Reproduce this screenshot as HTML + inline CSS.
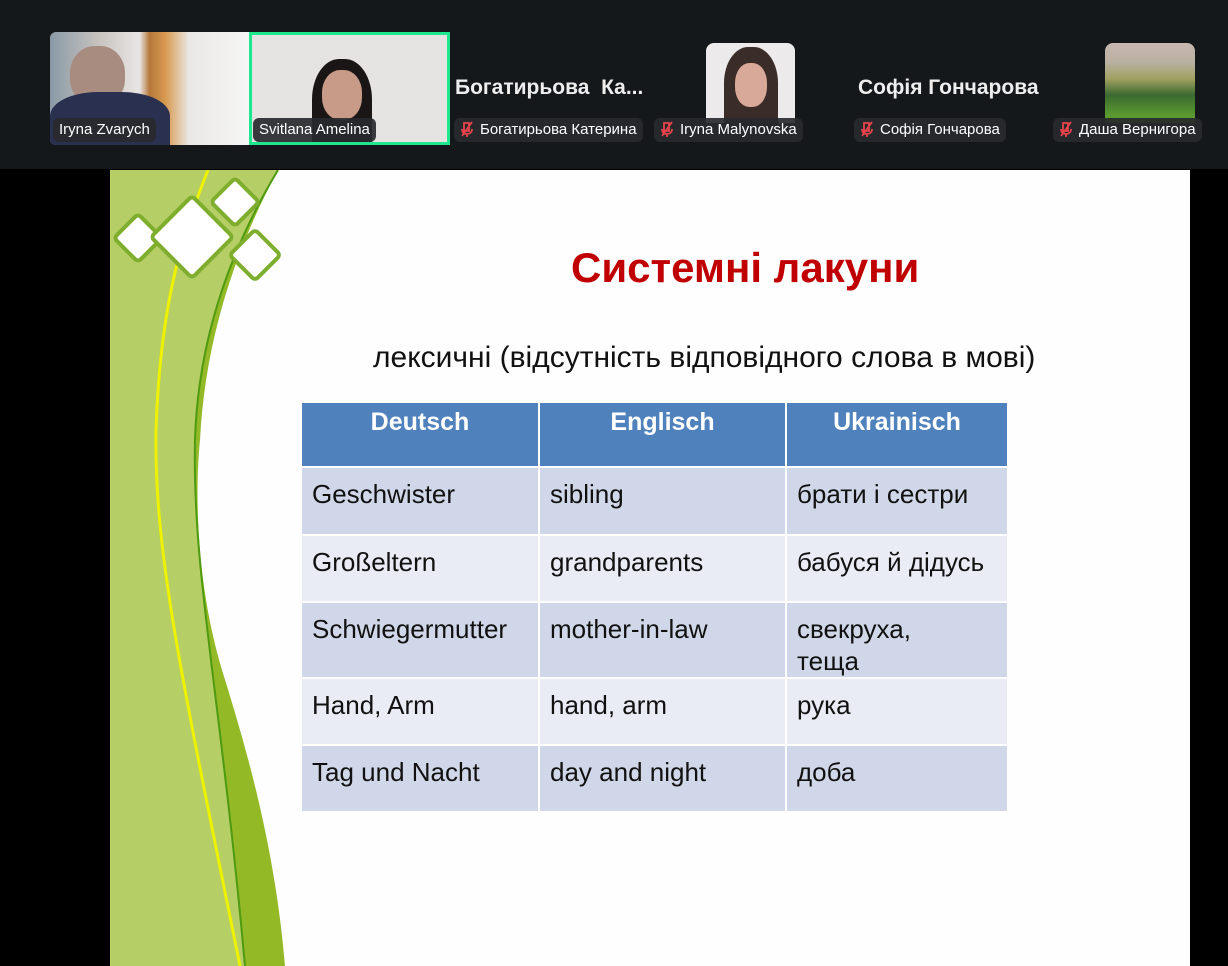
<!DOCTYPE html>
<html><head><meta charset="utf-8"><style>
*{margin:0;padding:0;box-sizing:border-box}
body{width:1228px;height:966px;background:#000;position:relative;overflow:hidden;font-family:"Liberation Sans","DejaVu Sans",sans-serif}
.top{position:absolute;left:0;top:0;width:1228px;height:169px;background:#15181b}
.tile{position:absolute;overflow:hidden}
.lbl{position:absolute;height:24px;background:rgba(40,42,46,.92);border-radius:6px;color:#fff;font-size:15px;line-height:24px;padding:0 6px;white-space:nowrap}
.mic{display:inline-block;width:14px;height:16px;vertical-align:-3px;margin-right:6px}
.big{position:absolute;color:#eee;font-weight:bold;font-size:21px;white-space:nowrap}
.slide{position:absolute;left:110px;top:170px;width:1080px;height:796px;background:#fefefe;overflow:hidden}
.cell{position:absolute;font-size:26px;color:#111;padding:10px 0 0 10px;line-height:32px}
.hd{position:absolute;font-size:25px;font-weight:bold;color:#fff;text-align:center;padding-top:5px}
</style></head><body>
<div class="top">
 <div class="tile" style="left:50px;top:32px;width:199px;height:113px;border-radius:6px 0 0 6px;background:linear-gradient(90deg,#8a9aa6 0,#c9c4c0 25%,#e8e6e4 45%,#b5773a 50%,#d89a50 58%,#eae8e6 70%,#f6f6f6 100%)">
  <div style="position:absolute;left:20px;top:14px;width:55px;height:60px;border-radius:45%;background:#a88c80"></div>
  <div style="position:absolute;left:0;top:60px;width:120px;height:60px;border-radius:40% 40% 0 0;background:#2a3050"></div>
 </div>
 <div class="tile" style="left:249px;top:32px;width:201px;height:113px;border:3px solid #1ee88e;background:#e6e4e2">
  <div style="position:absolute;left:60px;top:24px;width:60px;height:90px;border-radius:45% 45% 10% 10%;background:#1a1616"></div>
  <div style="position:absolute;left:70px;top:35px;width:40px;height:50px;border-radius:45%;background:#c89a88"></div>
 </div>
 <div class="lbl" style="left:53px;top:118px">Iryna Zvarych</div>
 <div class="lbl" style="left:253px;top:118px">Svitlana Amelina</div>
 <div class="big" style="left:455px;top:76px">Богатирьова&nbsp; Ка...</div>
 <div class="lbl" style="left:454px;top:118px"><svg class="mic" viewBox="0 0 14 16"><path d="M4 2h5v8H4z M2 8c0 3 2 5 5 5s5-2 5-5 M7 13v3 M2 15L12 1" stroke="#e8434a" stroke-width="1.8" fill="none"/></svg>Богатирьова Катерина</div>
 <div class="tile" style="left:706px;top:43px;width:89px;height:80px;border-radius:8px 8px 0 0;background:#eceaea">
  <div style="position:absolute;left:18px;top:4px;width:54px;height:80px;border-radius:45% 45% 0 0;background:#3a2c28"></div>
  <div style="position:absolute;left:29px;top:20px;width:32px;height:44px;border-radius:45%;background:#d8a898"></div>
 </div>
 <div class="lbl" style="left:654px;top:118px"><svg class="mic" viewBox="0 0 14 16"><path d="M4 2h5v8H4z M2 8c0 3 2 5 5 5s5-2 5-5 M7 13v3 M2 15L12 1" stroke="#e8434a" stroke-width="1.8" fill="none"/></svg>Iryna Malynovska</div>
 <div class="big" style="left:858px;top:76px">Софія Гончарова</div>
 <div class="lbl" style="left:854px;top:118px"><svg class="mic" viewBox="0 0 14 16"><path d="M4 2h5v8H4z M2 8c0 3 2 5 5 5s5-2 5-5 M7 13v3 M2 15L12 1" stroke="#e8434a" stroke-width="1.8" fill="none"/></svg>Софія Гончарова</div>
 <div class="tile" style="left:1105px;top:43px;width:90px;height:80px;border-radius:8px 8px 0 0;background:linear-gradient(180deg,#c8b8b0 0,#b8b0a0 25%,#a0a060 45%,#3a6a30 65%,#5a9a30 90%)"></div>
 <div class="lbl" style="left:1053px;top:118px"><svg class="mic" viewBox="0 0 14 16"><path d="M4 2h5v8H4z M2 8c0 3 2 5 5 5s5-2 5-5 M7 13v3 M2 15L12 1" stroke="#e8434a" stroke-width="1.8" fill="none"/></svg>Даша Вернигора</div>
</div>
<div class="slide">
 <svg width="1080" height="796" style="position:absolute;left:0;top:0">
  <path d="M0 0 L168 0 C120 80 88 170 85 270 C82 400 110 520 135 796 L0 796 Z" fill="#b5ce65"/>
  <path d="M168 0 C120 80 88 170 85 270 C82 400 110 520 135 796 L175 796 C165 680 140 590 112 500 C88 420 84 330 90 270 C95 170 125 80 168 0 Z" fill="#93b927"/>
  <path d="M168 0 C120 80 88 170 85 270 C82 400 110 520 135 796" fill="none" stroke="#4e9a10" stroke-width="2"/>
  <path d="M98 0 C70 70 50 140 46 260 C44 380 70 500 130 796" fill="none" stroke="#eef200" stroke-width="3"/>
  <g stroke="#7fae2e" stroke-width="4" fill="#fff">
   <rect x="-17" y="-17" width="34" height="34" rx="4" transform="translate(28 68) rotate(45)"/>
   <rect x="-17" y="-17" width="34" height="34" rx="4" transform="translate(125 32) rotate(45)"/>
   <rect x="-18" y="-18" width="36" height="36" rx="4" transform="translate(145 85) rotate(45)"/>
   <rect x="-29" y="-29" width="58" height="58" rx="4" transform="translate(82 67) rotate(45)"/>
  </g>
 </svg>
 <div style="position:absolute;left:461px;top:74px;font-size:42px;font-weight:bold;color:#c00000;white-space:nowrap">Системні лакуни</div>
 <div style="position:absolute;left:263px;top:171px;font-size:30px;color:#111;white-space:nowrap">лексичні (відсутність відповідного слова в мові)</div>
 <div style="position:absolute;left:192px;top:233px;width:705px;height:408px;background:#fff">
  <div style="position:absolute;left:0;top:0;width:236px;height:63px;background:#4f81bd"></div>
  <div style="position:absolute;left:238px;top:0;width:245px;height:63px;background:#4f81bd"></div>
  <div style="position:absolute;left:485px;top:0;width:220px;height:63px;background:#4f81bd"></div>
  <div class="hd" style="left:0;top:0;width:236px">Deutsch</div>
  <div class="hd" style="left:238px;top:0;width:245px">Englisch</div>
  <div class="hd" style="left:485px;top:0;width:220px">Ukrainisch</div>
 </div>
 <div style="position:absolute;left:192px;top:298px;width:705px">
  <div style="position:absolute;top:0;left:0;width:705px;height:66px;background:#d0d7e8"></div>
  <div style="position:absolute;top:68px;left:0;width:705px;height:65px;background:#e9ecf5"></div>
  <div style="position:absolute;top:135px;left:0;width:705px;height:74px;background:#d0d7e8"></div>
  <div style="position:absolute;top:211px;left:0;width:705px;height:65px;background:#e9ecf5"></div>
  <div style="position:absolute;top:278px;left:0;width:705px;height:65px;background:#d0d7e8"></div>
  <div style="position:absolute;top:0;left:236px;width:2px;height:343px;background:#fff"></div>
  <div style="position:absolute;top:0;left:483px;width:2px;height:343px;background:#fff"></div>
  <div class="cell" style="top:0;left:0">Geschwister</div>
  <div class="cell" style="top:0;left:238px">sibling</div>
  <div class="cell" style="top:0;left:485px">брати і сестри</div>
  <div class="cell" style="top:68px;left:0">Großeltern</div>
  <div class="cell" style="top:68px;left:238px">grandparents</div>
  <div class="cell" style="top:68px;left:485px">бабуся й дідусь</div>
  <div class="cell" style="top:135px;left:0">Schwiegermutter</div>
  <div class="cell" style="top:135px;left:238px">mother-in-law</div>
  <div class="cell" style="top:135px;left:485px">свекруха,<br>теща</div>
  <div class="cell" style="top:211px;left:0">Hand, Arm</div>
  <div class="cell" style="top:211px;left:238px">hand, arm</div>
  <div class="cell" style="top:211px;left:485px">рука</div>
  <div class="cell" style="top:278px;left:0">Tag und Nacht</div>
  <div class="cell" style="top:278px;left:238px">day and night</div>
  <div class="cell" style="top:278px;left:485px">доба</div>
 </div>
</div>
</body></html>
